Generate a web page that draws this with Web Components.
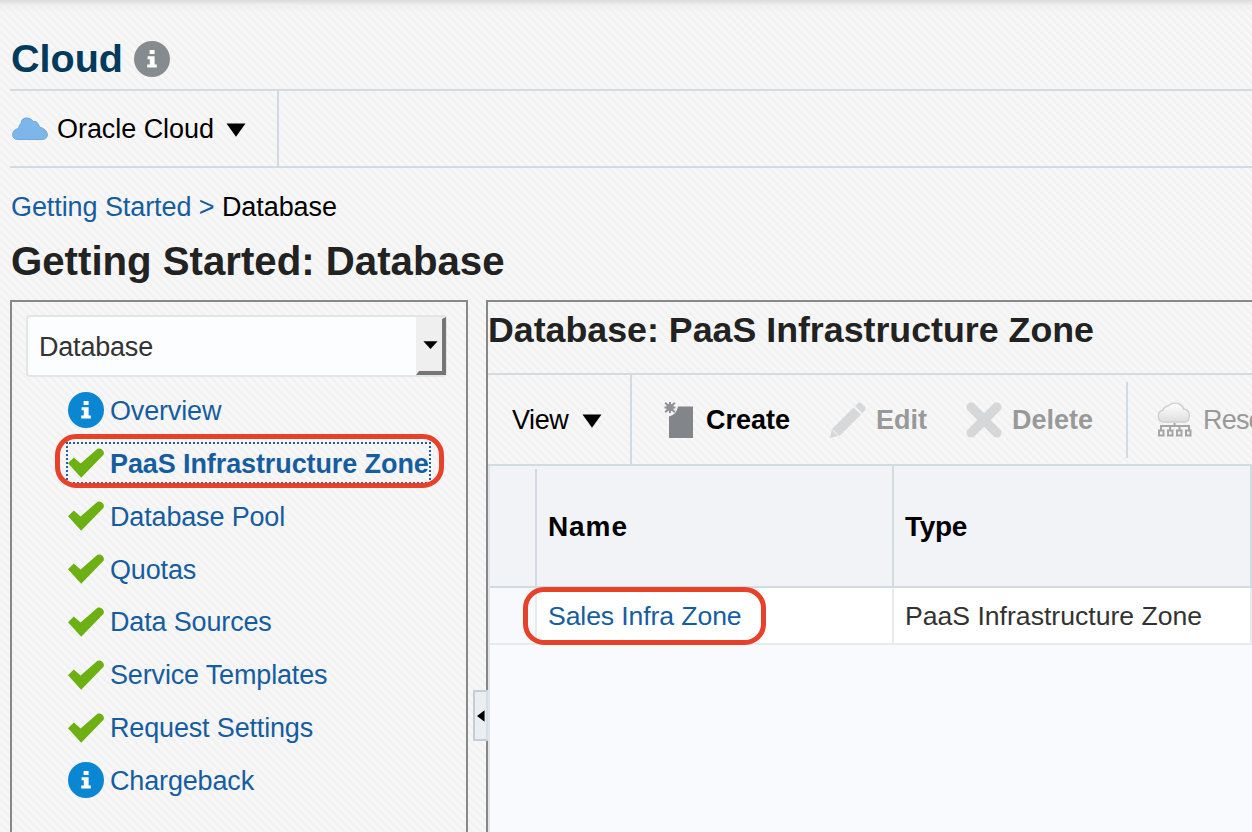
<!DOCTYPE html>
<html lang="en">
<head>
<meta charset="utf-8">
<title>Getting Started: Database</title>
<style>
html,body{margin:0;height:100%;overflow:hidden}
body{font-family:"Liberation Sans",Arial,sans-serif;font-size:27px;color:#000;
--line:#d3dbe2;--link:#165d9f;
background:linear-gradient(#dadada,rgba(236,236,236,.6) 5px,rgba(245,245,245,0) 13px),repeating-linear-gradient(45deg,#f2f2f3 0,#f2f2f3 1.6px,#f8f8f9 3.2px,#f8f8f9 4.2px,#f2f2f3 5.657px)}
</style>
</head>
<body>
<em-page></em-page>
<script>
function define(name, html, setup){
  const t=document.createElement('template');
  t.innerHTML=html;
  customElements.define(name,class extends HTMLElement{
    connectedCallback(){
      if(this.shadowRoot)return;
      const r=this.attachShadow({mode:'open'});
      r.appendChild(t.content.cloneNode(true));
      if(setup)setup(this,r);
    }
  });
}

const ICONS={
  info:`<svg viewBox="0 0 36 36"><circle cx="18" cy="18" r="18" fill="var(--ic,#0a86d2)"/><path fill="#fff" d="M15.6 9h5v4h-5zM13.6 15.3h7v8.3h2.2v3H13.2v-3h2.6v-5.4h-2.2z"/></svg>`,
  check:`<svg viewBox="0 0 36 36"><path fill="#6cb013" d="M0 18.200 5.800 12.500 12.600 18.500 29.500 3.800Q32 2.800 34.300 4.800Q37 7.500 35.300 10L13.200 32.800Z"/></svg>`,
  cloud:`<svg viewBox="0 0 36 36"><path fill="#7db6ea" stroke="#6fa8d9" stroke-width="1" d="M5.500 28.500Q.6 28 .6 23.500Q1 18.500 6.500 17.500Q7 13.500 9 12.500Q9 8 13 7Q18 6 21.500 10.500Q25.500 9.500 27.500 16Q35.500 18.500 35.400 24Q35 28 30 28.500Z"/></svg>`,
  create:`<svg viewBox="0 0 36 36"><path fill="#82868a" d="M7 14.500Q14.500 13 16 4.500H31V36H7Z"/><g stroke="#909396" stroke-width="2"><path d="M8 0V11M2.500 5.500H13.500M3.200 .8 12.800 10.300M12.800 .8 3.200 10.300"/></g><circle cx="8" cy="5.500" r="3.700" fill="#909396"/></svg>`,
  edit:`<svg viewBox="0 0 36 36"><path fill="#d6d8da" d="M0 36 2 27 23.500 5.500 31 12.500 10 33.500ZM25 4 28.500.6Q30 .2 31.500 1.500L35 5.200Q36 7 35 8.500L32.300 11.200Z"/><path stroke="#e9eaeb" stroke-width="1.500" d="M2.500 28 9 34"/></svg>`,
  del:`<svg viewBox="0 0 36 36"><path stroke="#d5d7d9" stroke-width="9.500" stroke-linecap="round" d="M5.200 5.200 30.800 30.800M30.800 5.200 5.200 30.800"/></svg>`,
  tree:`<svg viewBox="0 0 36 36"><defs><linearGradient id="g" x2="0" y2="1"><stop stop-color="#fff"/><stop offset="1" stop-color="#dedede"/></linearGradient></defs><path fill="url(#g)" stroke="#cfcfcf" stroke-width="1.400" d="M6 20Q1.500 19.500 1.300 14Q1.500 9 6 8.200Q7 4.500 11 4Q16-.8 23 2.500Q26 4 26.500 7Q32 7.500 32.500 13.500Q32 19.500 28 20Z"/><path stroke="#a6a6a6" stroke-width="2" fill="none" d="M17.500 21V24M4 28V24H32V28M13 24V28M22.500 24V28M2 28.500H6.500V33.500H2ZM11 28.500H15.500V33.500H11ZM20 28.500H24.500V33.500H20ZM29 28.500H33.500V33.500H29Z"/></svg>`
};
define('em-icon',`<style>:host{display:block;flex:none;width:36px;height:36px}svg{display:block;width:100%;height:100%;fill:none}</style>`,
 (el,r)=>r.appendChild(Object.assign(document.createElement('div'),{innerHTML:ICONS[el.getAttribute('name')]})));

define('em-caret',`<style>:host{display:block;flex:none;width:20px;height:14px}svg{display:block;width:100%;height:100%}</style><svg viewBox="0 0 20 14" preserveAspectRatio="none"><path d="M.5.5H19.500L10 13.800Z" fill="#000"/></svg>`);

define('em-banner',`<style>
:host{display:block;padding:28px 0 0 10px;height:140px}
.t{display:flex;align-items:center;height:61px;border-bottom:2px solid var(--line)}
h1{margin:0;font-size:39.500px;line-height:60px;color:#003b5c;width:123px;padding:0 0 2px 1px}
em-icon{--ic:#868b8f}
.m{display:flex;height:75px;border-bottom:2px solid var(--line)}
.c{display:flex;align-items:center;box-sizing:border-box;width:269px;padding:0 0 0 2px;border-right:2px solid var(--line)}
.c span{margin-left:9px;width:169px;padding-top:2px;letter-spacing:-.05px}
.c em-caret{margin-top:2px}
</style><div class="t"><h1>Cloud</h1><em-icon name="info"></em-icon></div>
<div class="m"><div class="c"><em-icon name="cloud"></em-icon><span>Oracle Cloud</span><em-caret></em-caret></div></div>`);

define('em-heading',`<style>
:host{display:block;padding-left:11px;height:132px}
nav{line-height:31px;padding-top:24px;color:var(--link);white-space:pre;letter-spacing:-.08px}
b{font-weight:normal;color:#000}
h2{margin:0;font-size:40.200px;line-height:46px;padding-top:16px;color:#222}
</style><nav>Getting Started <span>&gt;</span> <b>Database</b></nav><h2>Getting Started: Database</h2>`);

define('em-select',`<style>
:host{display:flex;box-sizing:border-box;height:62px;border:2px solid #e2e5e6;border-radius:4px;background:#fcfdfe;color:#333;align-items:center}
.v{flex:1;padding:2px 0 0 11px;letter-spacing:-.2px}
.b{box-sizing:border-box;width:30px;height:58px;margin-right:-1px;background:#efefef;border:4px solid;border-color:#efefef #757575 #757575 #efefef;border-top-width:2px;border-left-width:3px;display:flex;align-items:center;justify-content:center}
em-caret{width:15px;height:8px}
</style><div class="v"><slot></slot></div><div class="b"><em-caret></em-caret></div>`);

define('em-step',`<style>
:host{display:flex;position:relative;align-items:center;height:52.860px;color:var(--link);white-space:nowrap}
span{margin-left:6px;padding-top:2px;letter-spacing:-.16px}
:host([current]) span{font-weight:bold;letter-spacing:-.1px}
:host([current])::before{content:"";position:absolute;left:-2px;top:5px;width:361px;height:38px;border:2px dotted #26609c}
:host([current])::after{content:"";position:absolute;left:-13px;top:-3px;width:379px;height:44px;border:5px solid #e8412a;border-radius:21px}
</style><em-icon></em-icon><span><slot></slot></span>`,(el,r)=>{
  const i=r.querySelector('em-icon'),n=document.createElement('em-icon');
  n.setAttribute('name',el.getAttribute('icon'));i.replaceWith(n);
});

define('em-sidebar',`<style>
:host{display:block;box-sizing:border-box;border:2px solid #888;border-bottom:0;padding:13px 19px 0 14px}
.l{padding:7px 0 0 42px}
</style><em-select>Database</em-select><div class="l">
<em-step icon="info">Overview</em-step>
<em-step icon="check" current>PaaS Infrastructure Zone</em-step>
<em-step icon="check">Database Pool</em-step>
<em-step icon="check">Quotas</em-step>
<em-step icon="check">Data Sources</em-step>
<em-step icon="check">Service Templates</em-step>
<em-step icon="check">Request Settings</em-step>
<em-step icon="info">Chargeback</em-step></div>`);

define('em-toolbar',`<style>
:host{display:flex;height:89px;border-top:2px solid var(--line);border-bottom:2px solid var(--line);align-items:center;white-space:nowrap;overflow:hidden}
.v{display:flex;align-items:center;box-sizing:border-box;width:144px;height:89px;padding-left:24px;border-right:2px solid var(--line);flex:none}
.v span{width:70px;letter-spacing:-.4px;padding-top:1px}
.v em-caret{margin-top:2px}
.i{display:flex;align-items:center;flex:none;font-weight:bold}
.i span{margin-left:10px;padding-top:1px}
.c{margin-left:30px;width:168px}.c span{margin-left:8px}.e{width:136px;color:#999}.d{width:160px;color:#999}
.s{width:2px;height:76px;background:var(--line);flex:none;margin-right:29px}
.r{font-weight:normal;color:#999;letter-spacing:-.8px}
</style><div class="v"><span>View</span><em-caret></em-caret></div>
<div class="i c"><em-icon name="create"></em-icon><span>Create</span></div>
<div class="i e"><em-icon name="edit"></em-icon><span>Edit</span></div>
<div class="i d"><em-icon name="del"></em-icon><span>Delete</span></div>
<div class="s"></div><div class="i r"><em-icon name="tree"></em-icon><span>Reso</span></div>`);

define('em-table',`<style>
:host{display:flex;flex-direction:column;border-left:2px solid #e0e6eb;background:#f8fafd}
.h,.r{display:grid;grid-template-columns:47px 357px 358px 1fr;white-space:nowrap}
.h>*,.r>*{display:flex;align-items:center;box-sizing:border-box;padding-left:11px}
.h{height:120px;background:#f1f3f7;border-bottom:2px solid var(--line);font-weight:bold}
.h>*{border-right:2px solid var(--line);font-size:28px;padding-top:2px}
.n{letter-spacing:.9px}.t{letter-spacing:-.3px}
.h>:first-child{margin-top:3px}
.r{height:55px;border-bottom:2px solid #e8ebee;background:#fff;color:#333;font-size:26.600px}
.r>*{border-right:2px solid #e8ebee;padding-top:2px}
.r>:first-child{background:#f7f9fc}
.k{position:relative;color:var(--link);letter-spacing:-.1px}
.k::after{content:"";position:absolute;left:-14px;top:-1px;width:233px;height:48px;border:5px solid #e8412a;border-radius:21px}
</style><div class="h"><div></div><div class="n">Name</div><div class="t">Type</div></div>
<div class="r"><div></div><div class="k">Sales Infra Zone</div><div>PaaS Infrastructure Zone</div></div>`);

define('em-detail',`<style>
:host{display:flex;flex-direction:column;position:relative;box-sizing:border-box;border:2px solid #888;border-right:0;border-bottom:0;min-width:0}
h3{margin:0;font-size:35.750px;line-height:56px;height:71px;color:#222;white-space:nowrap}
em-table{flex:1}
.g{position:absolute;left:-15px;top:388px;width:11px;height:47px;border:2px solid #c6cdd4;border-right-color:#d3dfe9;background:#e9eef2;display:flex;align-items:center;justify-content:flex-end}
.g svg{margin-right:1px}
</style><h3>Database: PaaS Infrastructure Zone</h3><em-toolbar></em-toolbar><em-table></em-table>
<div class="g"><svg width="8" height="12" viewBox="0 0 9 13"><path d="M8.500 0V13L0 6.500Z"/></svg></div>`);

define('em-page',`<style>
:host{display:flex;flex-direction:column;height:832px;overflow:hidden}
em-banner,em-heading{flex:none}
main{flex:1;display:grid;grid-template-columns:458px minmax(0,1fr);gap:18px;padding-left:10px}
</style><em-banner></em-banner><em-heading></em-heading><main><em-sidebar></em-sidebar><em-detail></em-detail></main>`);
</script>
</body>
</html>
